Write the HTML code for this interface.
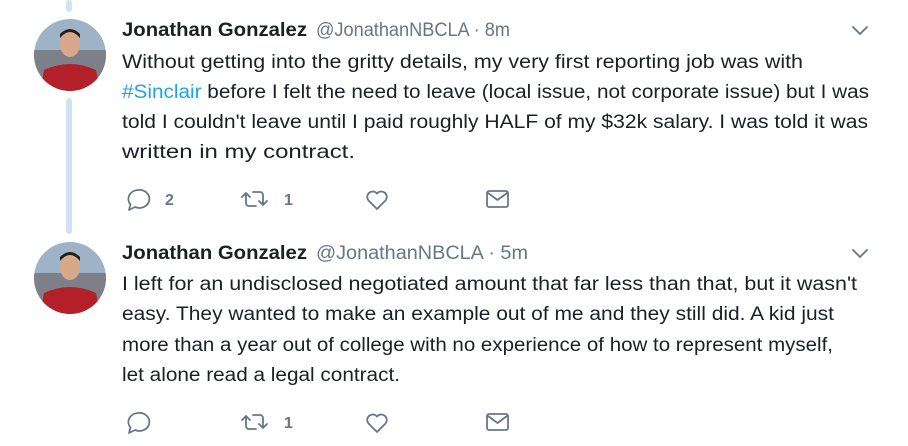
<!DOCTYPE html>
<html><head><meta charset="utf-8"><style>
html,body{margin:0;padding:0;background:#fff;width:908px;height:446px;overflow:hidden}
svg{display:block}
text{font-family:"Liberation Sans",sans-serif;font-size:19px;fill:#1c2024}
.n{font-weight:bold}
.h{fill:#657786}
.l{fill:#1da1f2}
.c{font-weight:bold;fill:#657786;font-size:16px}
.ic{fill:none;stroke:#657786;stroke-width:1.8;stroke-linecap:round;stroke-linejoin:round}
</style></head><body>
<svg width="908" height="446" viewBox="0 0 908 446">
<defs>
<clipPath id="a1"><circle cx="70" cy="55" r="36"/></clipPath>
<clipPath id="a2"><circle cx="70" cy="278" r="36"/></clipPath>
<g id="acts">
<path d="M138 190 a10 9 0 1 1 -3 17 l-6 3 l1.5 -5.5 a10 9 0 0 1 7.5 -14.5z" class="ic"/>
<path d="M242 197 l4 -4 l4 4 M246 193 v10 a3 3 0 0 0 3 3 h7 M253 192 h7 a3 3 0 0 1 3 3 v10 M259 201 l4 4 l4 -4" class="ic"/>
<path d="M377 209 l-8.5 -8.5 a5.5 5.5 0 0 1 8.5 -7 a5.5 5.5 0 0 1 8.5 7z" class="ic"/>
<rect x="487" y="191" width="21" height="16" rx="2" class="ic"/>
<path d="M488 193 l9.5 7 l9.5 -7" class="ic"/>
</g>
</defs>
<rect x="66" y="0" width="6" height="12" rx="3" fill="#cfe3f2"/>
<rect x="66" y="98" width="6" height="136" rx="3" fill="#cfe3f2"/>
<g clip-path="url(#a1)">
<rect x="34" y="19" width="72" height="72" fill="#9fb3c8"/>
<rect x="34" y="50" width="72" height="41" fill="#7d8088"/>
<path d="M40 91 L44 70 Q70 58 96 70 L100 91Z" fill="#b3202a"/>
<ellipse cx="70" cy="44" rx="10" ry="13" fill="#d8a88a"/>
<path d="M60 38 Q70 26 80 38 L80 34 Q70 24 60 34Z" fill="#2a1d18"/>
</g>
<g clip-path="url(#a2)">
<rect x="34" y="242" width="72" height="72" fill="#9fb3c8"/>
<rect x="34" y="273" width="72" height="41" fill="#7d8088"/>
<path d="M40 314 L44 293 Q70 281 96 293 L100 314Z" fill="#b3202a"/>
<ellipse cx="70" cy="267" rx="10" ry="13" fill="#d8a88a"/>
<path d="M60 261 Q70 249 80 261 L80 257 Q70 247 60 257Z" fill="#2a1d18"/>
</g>

<text x="122" y="36" class="n" textLength="185" lengthAdjust="spacingAndGlyphs">Jonathan Gonzalez</text>
<text x="316" y="36" class="h" textLength="194" lengthAdjust="spacingAndGlyphs">@JonathanNBCLA · 8m</text>
<path d="M853 27 L860 34 L867 27" class="ic" stroke-width="2"/>
<text x="122" y="68" textLength="681" lengthAdjust="spacingAndGlyphs">Without getting into the gritty details, my very first reporting job was with</text>
<text x="122" y="98" textLength="747" lengthAdjust="spacingAndGlyphs"><tspan class="l">#Sinclair</tspan> before I felt the need to leave (local issue, not corporate issue) but I was</text>
<text x="122" y="128" textLength="746" lengthAdjust="spacingAndGlyphs">told I couldn't leave until I paid roughly HALF of my $32k salary. I was told it was</text>
<text x="122" y="158" textLength="233" lengthAdjust="spacingAndGlyphs">written in my contract.</text>

<use href="#acts"/>
<text x="165" y="205" class="c">2</text>
<text x="284" y="205" class="c">1</text>

<text x="122" y="259" class="n" textLength="185" lengthAdjust="spacingAndGlyphs">Jonathan Gonzalez</text>
<text x="316" y="259" class="h" textLength="212" lengthAdjust="spacingAndGlyphs">@JonathanNBCLA · 5m</text>
<path d="M853 250 L860 257 L867 250" class="ic" stroke-width="2"/>
<text x="122" y="290" textLength="735" lengthAdjust="spacingAndGlyphs">I left for an undisclosed negotiated amount that far less than that, but it wasn't</text>
<text x="122" y="320" textLength="712" lengthAdjust="spacingAndGlyphs">easy. They wanted to make an example out of me and they still did. A kid just</text>
<text x="122" y="351" textLength="711" lengthAdjust="spacingAndGlyphs">more than a year out of college with no experience of how to represent myself,</text>
<text x="122" y="381" textLength="278" lengthAdjust="spacingAndGlyphs">let alone read a legal contract.</text>

<use href="#acts" y="223"/>
<text x="284" y="428" class="c">1</text>
</svg>
</body></html>
